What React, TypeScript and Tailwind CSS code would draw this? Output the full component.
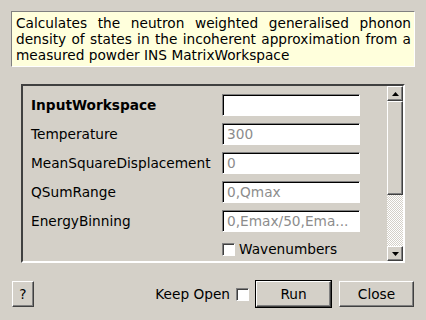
import React from 'react';

const fields = [
  { label: 'InputWorkspace', value: '', bold: true },
  { label: 'Temperature', value: '300' },
  { label: 'MeanSquareDisplacement', value: '0' },
  { label: 'QSumRange', value: '0,Qmax' },
  { label: 'EnergyBinning', value: '0,Emax/50,Ema...' },
];

const raised =
  'border border-t-white border-l-white border-b-[#404040] border-r-[#404040] shadow-[inset_-1px_-1px_0_#808080]';

const Checkbox: React.FC = () => (
  <span className="inline-block w-[13px] h-[13px] bg-white border border-t-[#808080] border-l-[#808080] border-b-white border-r-white shadow-[inset_1px_1px_0_#404040]" />
);

const ScrollBar: React.FC = () => (
  <div className="w-[16px] flex flex-col">
    <div className={`h-[15px] bg-[#d4d0c8] flex items-center justify-center ${raised}`}>
      <svg width="7" height="4" viewBox="0 0 7 4">
        <polygon points="3.5,0 7,4 0,4" fill="#000" />
      </svg>
    </div>
    <div className={`h-[94px] bg-[#d4d0c8] ${raised}`} />
    <div className="flex-1 bg-[repeating-conic-gradient(#ffffff_0_25%,#d4d0c8_0_50%)] bg-[length:2px_2px]" />
    <div className={`h-[15px] bg-[#d4d0c8] flex items-center justify-center ${raised}`}>
      <svg width="7" height="4" viewBox="0 0 7 4">
        <polygon points="0,0 7,0 3.5,4" fill="#000" />
      </svg>
    </div>
  </div>
);

const App: React.FC = () => {
  return (
    <div className="w-[426px] h-[320px] bg-[#d4d0c8] font-['DejaVu_Sans',sans-serif] text-[13.7px] text-black overflow-hidden">
      <div className="pt-[11px] px-[11px]">
        <div className="bg-[#ffffdc] border border-t-[#808080] border-l-[#808080] border-b-white border-r-white pl-[4px] pr-[3px] pt-[3px] pb-[3px] leading-[16px] text-justify">
          Calculates the neutron weighted generalised phonon density of states in the incoherent approximation from a measured powder INS MatrixWorkspace
        </div>
      </div>

      <div className="mt-[17px] mx-[21px] h-[179px] flex border-2 border-t-[#404040] border-l-[#404040] border-b-white border-r-white">
        <div className="flex-1 pl-[8px] pt-[8px] flex flex-col gap-[7px]">
          {fields.map(f => (
            <div key={f.label} className="flex items-center h-[22px]">
              <span className={`w-[191px] ${f.bold ? 'font-bold' : ''}`}>{f.label}</span>
              <div className="w-[138px] h-[22px] bg-white border border-t-[#808080] border-l-[#808080] border-b-white border-r-white shadow-[inset_1px_1px_0_#000] pl-[4px] flex items-center text-[#8c8c8c]">
                {f.value}
              </div>
            </div>
          ))}
          <div className="flex items-center h-[20px] pl-[191px] gap-[4px]">
            <Checkbox />
            <span>Wavenumbers</span>
          </div>
        </div>
        <ScrollBar />
      </div>

      <div className="mt-[17px] pl-[12px] pr-[12px] flex items-center">
        <button className={`w-[22px] h-[26px] bg-[#d4d0c8] ${raised}`}>?</button>
        <div className="flex-1" />
        <span className="mr-[6px]">Keep Open</span>
        <Checkbox />
        <div className="ml-[6px] border border-black">
          <button className={`w-[75px] h-[26px] bg-[#d4d0c8] ${raised}`}>Run</button>
        </div>
        <button className={`ml-[7px] w-[75px] h-[26px] bg-[#d4d0c8] ${raised}`}>Close</button>
      </div>
    </div>
  );
};

export default App;
